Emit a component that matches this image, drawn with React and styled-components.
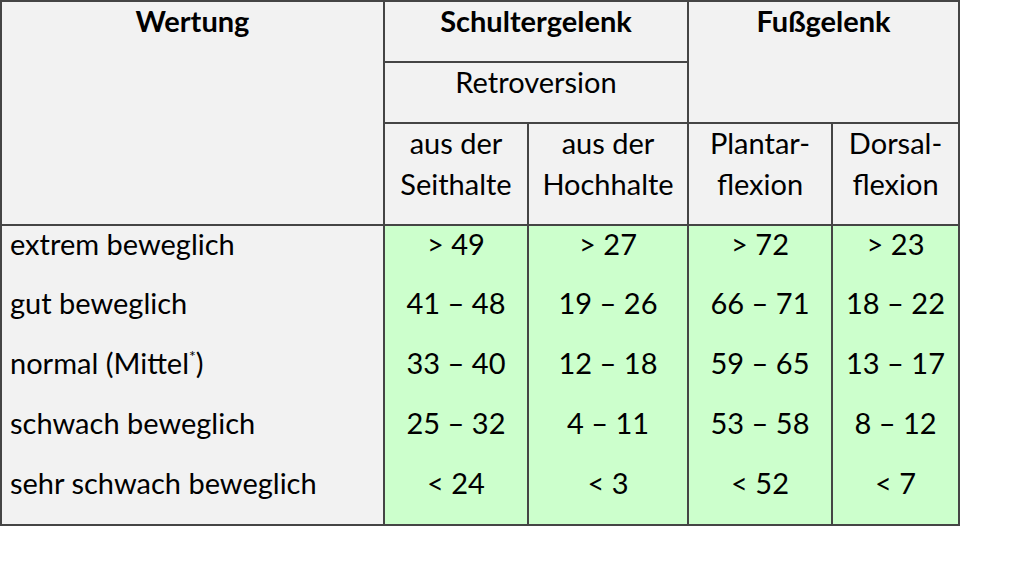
import React from "react";
import styled, { createGlobalStyle } from "styled-components";

const Global = createGlobalStyle`
  html, body { margin: 0; padding: 0; background: #ffffff; }
  body { font-family: Lato, "Open Sans", "Liberation Sans", sans-serif; color: #000; }
`;

const Table = styled.table`
  border-collapse: collapse;
  table-layout: fixed;
  width: 958px;
  font-size: 29px;
  line-height: 41px;
`;

const HeadRow = styled.tr`
  height: ${(p) => p.$h}px;
`;

const BodyRow = styled.tr`
  height: 60px;
`;

const Th = styled.th`
  background: #f2f2f2;
  border: 2px solid #454545;
  vertical-align: top;
  text-align: center;
  padding: 0 4px;
  font-weight: ${(p) => (p.$bold ? 700 : 400)};
`;

const LabelCell = styled.td`
  background: #f2f2f2;
  border-left: 2px solid #454545;
  border-right: 2px solid #454545;
  border-bottom: ${(p) => (p.$last ? "2px solid #454545" : "none")};
  vertical-align: top;
  text-align: left;
  padding: 0 0 0 8px;
  white-space: nowrap;
`;

const ValueCell = styled.td`
  background: #ccffcc;
  border-left: 2px solid #454545;
  border-right: 2px solid #454545;
  border-bottom: ${(p) => (p.$last ? "2px solid #454545" : "none")};
  vertical-align: top;
  text-align: center;
  padding: 0;
  white-space: nowrap;
`;

const Text = styled.div`
  margin-top: ${(p) => p.$shift}px;
`;

const Sup = styled.sup`
  font-size: 16px;
  line-height: 0;
  vertical-align: 12px;
`;

const rows = [
  { label: "extrem beweglich", v: ["> 49", "> 27", "> 72", "> 23"] },
  { label: "gut beweglich", v: ["41 – 48", "19 – 26", "66 – 71", "18 – 22"] },
  {
    label: (
      <>
        normal (Mittel<Sup>*</Sup>)
      </>
    ),
    v: ["33 – 40", "12 – 18", "59 – 65", "13 – 17"],
  },
  { label: "schwach beweglich", v: ["25 – 32", "4 – 11", "53 – 58", "8 – 12"] },
  { label: "sehr schwach beweglich", v: ["< 24", "< 3", "< 52", "< 7"] },
];

export default function App() {
  return (
    <>
      <Global />
      <Table>
        <colgroup>
          <col style={{ width: 383 }} />
          <col style={{ width: 144 }} />
          <col style={{ width: 160 }} />
          <col style={{ width: 144 }} />
          <col style={{ width: 127 }} />
        </colgroup>
        <thead>
          <HeadRow $h={61}>
            <Th $bold rowSpan={3}><Text $shift={-2}>Wertung</Text></Th>
            <Th $bold colSpan={2}><Text $shift={-2}>Schultergelenk</Text></Th>
            <Th $bold colSpan={2} rowSpan={2}><Text $shift={-2}>Fußgelenk</Text></Th>
          </HeadRow>
          <HeadRow $h={61}>
            <Th colSpan={2}><Text $shift={-2}>Retroversion</Text></Th>
          </HeadRow>
          <HeadRow $h={102}>
            <Th><Text $shift={-2}>aus der<br />Seithalte</Text></Th>
            <Th><Text $shift={-2}>aus der<br />Hochhalte</Text></Th>
            <Th><Text $shift={-2}>Plantar-<br />flexion</Text></Th>
            <Th><Text $shift={-2}>Dorsal-<br />flexion</Text></Th>
          </HeadRow>
        </thead>
        <tbody>
          {rows.map((r, i) => (
            <BodyRow key={i}>
              <LabelCell $last={i === rows.length - 1}>
                <Text $shift={-3}>{r.label}</Text>
              </LabelCell>
              {r.v.map((val, j) => (
                <ValueCell key={j} $last={i === rows.length - 1}>
                  <Text $shift={-3}>{val}</Text>
                </ValueCell>
              ))}
            </BodyRow>
          ))}
        </tbody>
      </Table>
    </>
  );
}
